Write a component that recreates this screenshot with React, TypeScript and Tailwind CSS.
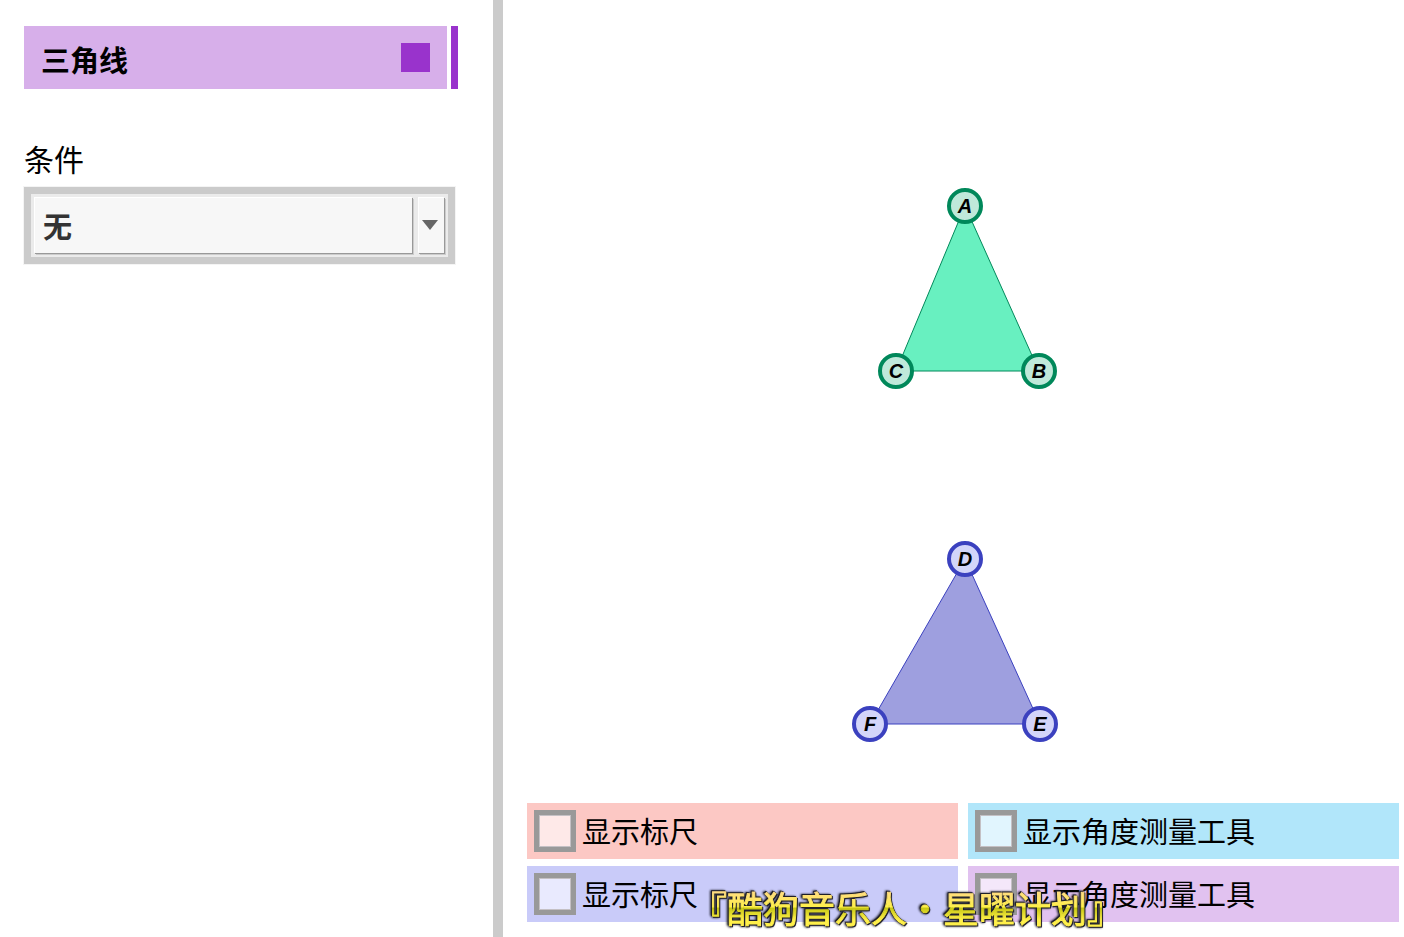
import { useState } from "react";
import clsx from "clsx";

type Point = { name: string; x: number; y: number };

const triangles = [
  {
    points: [
      { name: "A", x: 462, y: 206 },
      { name: "B", x: 536, y: 371 },
      { name: "C", x: 393, y: 371 },
    ],
    fill: "#68f0c0",
    stroke: "#00885a",
    nodeFill: "#bfe9da",
  },
  {
    points: [
      { name: "D", x: 462, y: 559 },
      { name: "E", x: 537, y: 724 },
      { name: "F", x: 367, y: 724 },
    ],
    fill: "#9e9fdf",
    stroke: "#3b41bf",
    nodeFill: "#d3d5f9",
  },
];

const tools = [
  { id: "ruler-1", label: "显示标尺", row: "bg-[#fcc8c4]", box: "bg-[#fee9e8]" },
  { id: "angle-1", label: "显示角度测量工具", row: "bg-[#b1e6fa]", box: "bg-[#e1f5fe]" },
  { id: "ruler-2", label: "显示标尺", row: "bg-[#c9cbf9]", box: "bg-[#e9eafe]" },
  { id: "angle-2", label: "显示角度测量工具", row: "bg-[#e1c2f0]", box: "bg-[#f4e7fa]" },
];

const Triangle = ({
  points,
  fill,
  stroke,
  nodeFill,
}: {
  points: Point[];
  fill: string;
  stroke: string;
  nodeFill: string;
}) => {
  return (
    <g>
      <polygon
        points={points.map((p) => `${p.x},${p.y}`).join(" ")}
        fill={fill}
        stroke={stroke}
        strokeWidth={1}
      />
      {points.map((p) => (
        <g key={p.name}>
          <circle cx={p.x} cy={p.y} r={16} fill={nodeFill} stroke={stroke} strokeWidth={4} />
          <text
            x={p.x}
            y={p.y + 7}
            textAnchor="middle"
            className="fill-black font-['Liberation_Sans',sans-serif] text-[20px] font-bold italic"
          >
            {p.name}
          </text>
        </g>
      ))}
    </g>
  );
};

const ConditionSelect = () => {
  return (
    <div className="mr-[3px] flex gap-[6px] border-[7px] border-[#cbcbcb] bg-[#ebebeb] pt-[3px] pr-1 pb-1 pl-[3px] shadow-[0_0_0_1px_#f4f4f4]">
      <select
        id="condition"
        className="h-14 min-w-0 flex-1 appearance-none border border-t-white border-r-[#f7f7f7] border-b-[#f7f7f7] border-l-white bg-[#f7f7f7] px-2 pt-0.5 text-[29px] font-bold text-[#333333] shadow-[1px_1px_0_#999999,2px_2px_0_#cccccc]"
      >
        <option>无</option>
      </select>
      <span
        aria-hidden="true"
        className="flex w-[26px] items-center justify-center border border-t-white border-r-[#f7f7f7] border-b-[#f7f7f7] border-l-white bg-[#f7f7f7] pr-0.5 shadow-[1px_1px_0_#999999,2px_2px_0_#cccccc]"
      >
        <svg width="16" height="10" viewBox="0 0 16 10">
          <path d="M0 0H16L8 10Z" fill="#666666" />
        </svg>
      </span>
    </div>
  );
};

const ToolToggle = ({ id, label, row, box }: { id: string; label: string; row: string; box: string }) => {
  const [checked, setChecked] = useState(false);

  return (
    <label htmlFor={id} className={clsx("flex items-center gap-[6px] p-[7px]", row)}>
      <input
        id={id}
        type="checkbox"
        checked={checked}
        onChange={() => setChecked(!checked)}
        className={clsx(
          "size-[42px] shrink-0 appearance-none border-[5px] border-[#999999] shadow-[inset_0_0_0_1px_#c4c0c4] checked:bg-[#999999]",
          box
        )}
      />
      <span className="pb-0.5 text-[29px] leading-10">{label}</span>
    </label>
  );
};

export default function App() {
  return (
    <div className="flex min-h-screen bg-white font-['Noto_Sans_CJK_SC',sans-serif] text-black">
      <aside className="w-[503px] shrink-0 border-r-[10px] border-[#cbcbcb] pt-[26px] pr-[35px] pl-6">
        <div className="flex gap-1">
          <div className="flex h-[63px] flex-1 items-center justify-between bg-[#d7afea] px-[17px]">
            <h1 className="pt-0.5 text-[29px] leading-10 font-bold">三角线</h1>
            <span className="size-[29px] bg-[#9933cc]" />
          </div>
          <div className="w-[7px] bg-[#9933cc]" />
        </div>

        <label htmlFor="condition" className="mt-12 mb-2 block text-[30px] leading-[42px]">
          条件
        </label>
        <ConditionSelect />
      </aside>

      <main className="relative flex min-w-0 flex-1 flex-col">
        <svg viewBox="0 0 901 803" className="min-h-0 w-full flex-1" role="img" aria-label="ABC DEF">
          {triangles.map((t) => (
            <Triangle key={t.stroke} {...t} />
          ))}
        </svg>

        <div className="grid grid-cols-2 gap-x-[10px] gap-y-[7px] pr-[5px] pb-[15px] pl-6">
          {tools.map((tool) => (
            <ToolToggle key={tool.id} {...tool} />
          ))}
        </div>

        {/* subtitle floats over the toggles */}
        <p className="pointer-events-none absolute bottom-[3px] left-[188px] bg-[linear-gradient(#ffdc82_22%,#fff04a_50%,#c8c814_52%,#fff04a_74%)] bg-clip-text text-[36px] leading-[54px] whitespace-nowrap text-transparent [-webkit-text-stroke:1px_transparent] filter-[drop-shadow(1px_1px_0_#20202a)_drop-shadow(-1px_-1px_0_#20202a)_drop-shadow(-1px_0_1px_#20202a)]">
          『酷狗音乐人・星曜计划』
        </p>
      </main>
    </div>
  );
}
